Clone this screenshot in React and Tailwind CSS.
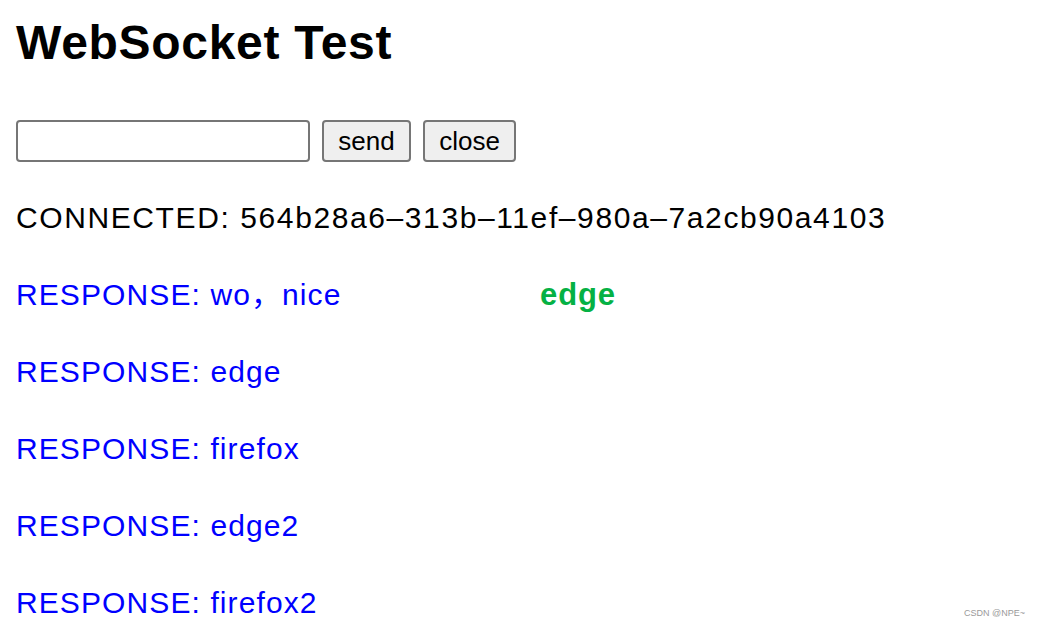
import { useState } from "react";

const respuestas = ["edge", "firefox", "edge2", "firefox2"];

function App() {
  const [mensaje, setMensaje] = useState("");

  return (
    <div className="relative min-h-[626px] overflow-hidden bg-white px-4 font-['Liberation_Sans','Noto_Sans_CJK_SC',Arial,sans-serif] text-black">
      <h1 className="pt-[19px] text-[48px] font-bold leading-none tracking-[0.7px]">WebSocket Test</h1>

      {/* Barra de envío */}
      <div className="mt-[53px] flex gap-3">
        <input
          type="text"
          value={mensaje}
          onChange={(e) => setMensaje(e.target.value)}
          className="h-[42px] w-[294px] rounded-[4px] border-2 border-[#767676] bg-white px-2 text-[26px] outline-none"
        />
        <button className="h-[42px] w-[89px] rounded-[4px] border-2 border-[#767676] bg-[#efefef] text-[26px] leading-none">
          send
        </button>
        <button className="h-[42px] w-[93px] rounded-[4px] border-2 border-[#767676] bg-[#efefef] text-[26px] leading-none">
          close
        </button>
      </div>

      <div className="mt-[38px] flex flex-col gap-[41px] text-[30px] leading-[36px] tracking-[1.1px]">
        <p className="tracking-[1.6px]">CONNECTED: 564b28a6–313b–11ef–980a–7a2cb90a4103</p>
        <p className="flex items-baseline text-[#0000ff]">
          <span className="w-[524px]">RESPONSE: wo，nice</span>
          <span className="text-[31px] font-bold tracking-[0.9px] text-[#05b144]">edge</span>
        </p>
        {respuestas.map((r, i) => (
          <p key={i} className="text-[#0000ff]">
            RESPONSE: {r}
          </p>
        ))}
      </div>

      <span className="absolute bottom-[6px] right-[15px] text-[9px] text-[#9a9a9a]">CSDN @NPE~</span>
    </div>
  );
}

export default App;
